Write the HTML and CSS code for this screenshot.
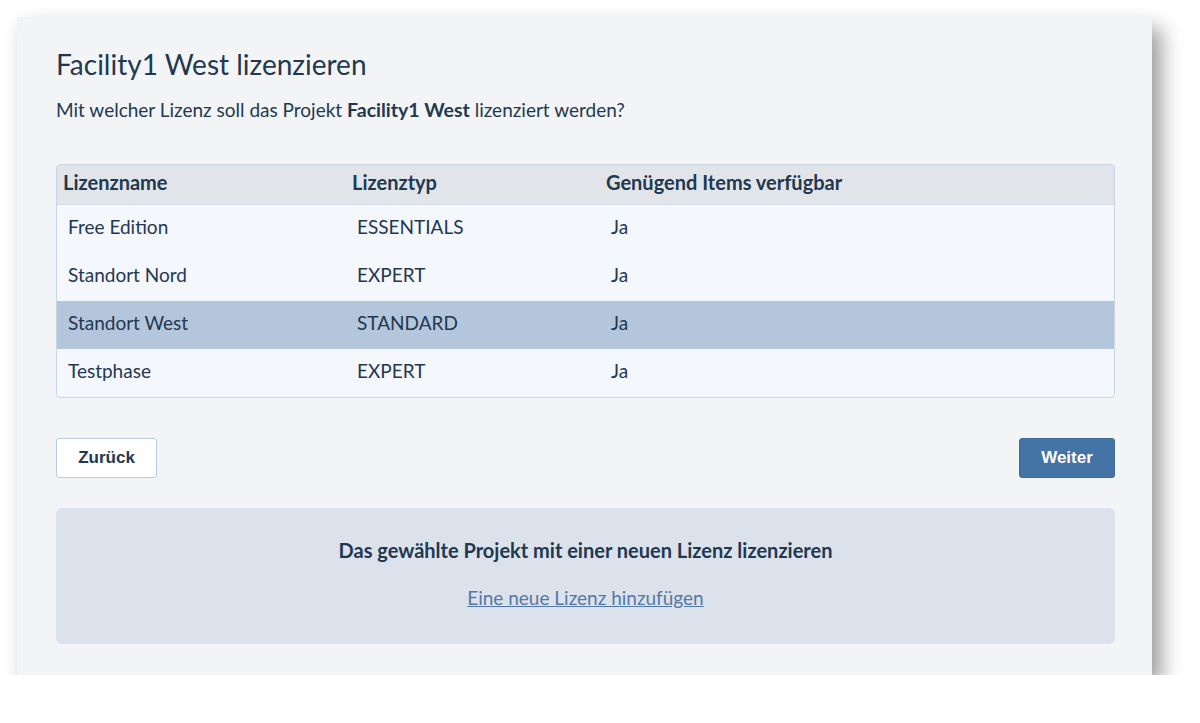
FILE: index.html
```html
<!DOCTYPE html>
<html lang="de">
<head>
<meta charset="utf-8">
<link rel="stylesheet" href="styles.css">
</head>
<body>
<div class="panel">
  <h1 class="title">Facility1 West lizenzieren</h1>
  <p class="lead">Mit welcher Lizenz soll das Projekt <b>Facility1 West</b> lizenziert werden?</p>
  <div class="table">
    <div class="row head">
      <div class="c1">Lizenzname</div>
      <div class="c2">Lizenztyp</div>
      <div class="c3">Genügend Items verfügbar</div>
    </div>
    <div class="row">
      <div class="c1">Free Edition</div>
      <div class="c2">ESSENTIALS</div>
      <div class="c3">Ja</div>
    </div>
    <div class="row">
      <div class="c1">Standort Nord</div>
      <div class="c2">EXPERT</div>
      <div class="c3">Ja</div>
    </div>
    <div class="row selected">
      <div class="c1">Standort West</div>
      <div class="c2">STANDARD</div>
      <div class="c3">Ja</div>
    </div>
    <div class="row">
      <div class="c1">Testphase</div>
      <div class="c2">EXPERT</div>
      <div class="c3">Ja</div>
    </div>
  </div>
  <div class="actions">
    <button class="btn btn-back">Zurück</button>
    <button class="btn btn-next">Weiter</button>
  </div>
  <div class="info">
    <div class="info-title">Das gewählte Projekt mit einer neuen Lizenz lizenzieren</div>
    <a class="info-link" href="#">Eine neue Lizenz hinzufügen</a>
  </div>
</div>
</body>
</html>
```
FILE: styles.css
```css
html, body {
  margin: 0;
  padding: 0;
  background: #ffffff;
}
body {
  font-family: "Lato", "Liberation Sans", sans-serif;
  color: #223851;
}
.panel {
  margin: 17px 0 0 17px;
  width: 1135px;
  height: 658px;
  box-sizing: border-box;
  padding: 27px 37px 0 39px;
  background: #f3f4f6;
  box-shadow: 9px 11px 20px rgba(0,0,0,0.4);
}
.title {
  margin: 0;
  font-size: 28px;
  font-weight: 400;
  line-height: 40px;
}
.lead {
  margin: 13px 0 0;
  font-size: 19px;
  line-height: 26px;
}
.lead b { font-weight: 700; font-size: 19.5px; }
.table {
  margin-top: 41px;
  border: 1px solid #c8d5e5;
  border-radius: 4px;
  overflow: hidden;
  background: #f4f7fb;
}
.row {
  display: flex;
  box-sizing: border-box;
  height: 48px;
  padding-bottom: 5px;
  align-items: center;
  font-size: 19px;
}
.row > div { box-sizing: border-box; padding-left: 11px; }
.c1 { width: 289px; }
.c2 { width: 254px; }
.c3 { flex: 1; }
.row.head {
  height: 40px;
  background: #e1e5ea;
  font-weight: 700;
  font-size: 20px;
  border-bottom: 1px solid #d6dde6;
}
.row.head > div { padding-left: 6px; }
.row.selected { background: #b4c6dc; }
.actions {
  display: flex;
  justify-content: space-between;
  margin-top: 40px;
}
.btn {
  font-family: "Liberation Sans", Arial, sans-serif;
  font-weight: 700;
  font-size: 17px;
  height: 40px;
  border-radius: 3px;
  cursor: pointer;
}
.btn-back {
  width: 101px;
  background: #ffffff;
  color: #223851;
  border: 1px solid #b9cbe0;
}
.btn-next {
  width: 96px;
  background: #4473a5;
  color: #ffffff;
  border: 1px solid #3d6b9c;
}
.info {
  margin-top: 30px;
  height: 136px;
  box-sizing: border-box;
  background: #dbe2ec;
  border-radius: 6px;
  display: flex;
  flex-direction: column;
  align-items: center;
  padding-top: 30px;
}
.info-title {
  font-size: 20px;
  font-weight: 700;
  line-height: 24px;
}
.info-link {
  margin-top: 24px;
  font-size: 19px;
  line-height: 24px;
  color: #5379a8;
  text-decoration: underline;
}
```
